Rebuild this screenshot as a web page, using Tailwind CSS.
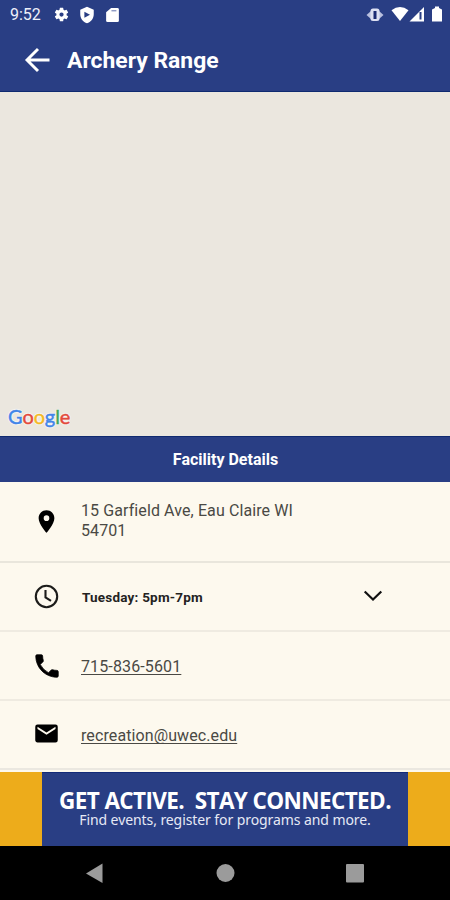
<!DOCTYPE html>
<html lang="en">
<head>
  <meta charset="UTF-8" />
  <meta name="viewport" content="width=device-width, initial-scale=1.0"/>
  <title>Archery Range</title>
  <script src="https://cdn.jsdelivr.net/npm/@tailwindcss/browser@4"></script>
</head>
<body class="w-[450px] h-[900px] overflow-hidden flex flex-col bg-[#fdf9ee] font-[Roboto,sans-serif]">

  <!-- Status bar + Header -->
  <header class="h-[92px] shrink-0 bg-[#293e84] text-white border-b border-[#0f2a70]">
    <div class="h-[30px] flex items-center pl-[10px] pr-[8px]">
      <span class="text-[16px] w-[43px] leading-[30px] text-[#eef0fa]">9:52</span>
      <svg class="w-[17px] h-[17px] -mt-[1px]" viewBox="0 0 24 24" fill="white"><path d="M19.14 12.94c.04-.3.06-.61.06-.94 0-.32-.02-.64-.07-.94l2.03-1.58a.49.49 0 0 0 .12-.61l-1.92-3.32a.49.49 0 0 0-.59-.22l-2.39.96a7 7 0 0 0-1.62-.94l-.36-2.54a.48.48 0 0 0-.48-.41h-3.84a.47.47 0 0 0-.47.41l-.36 2.54c-.59.24-1.13.57-1.62.94l-2.39-.96a.48.48 0 0 0-.59.22L2.74 8.87a.48.48 0 0 0 .12.61l2.03 1.58a6 6 0 0 0 0 1.88l-2.03 1.58a.49.49 0 0 0-.12.61l1.92 3.32c.12.22.37.29.59.22l2.39-.96c.5.38 1.03.7 1.62.94l.36 2.54c.05.24.24.41.48.41h3.84c.24 0 .44-.17.47-.41l.36-2.54a7 7 0 0 0 1.62-.94l2.39.96c.22.08.47 0 .59-.22l1.92-3.32a.48.48 0 0 0-.12-.61zM12 15a3 3 0 1 1 0-6 3 3 0 0 1 0 6z"/></svg>
      <svg class="w-[18px] h-[18px] ml-[8px] -mt-[1px]" viewBox="0 0 24 24" fill="white"><path fill-rule="evenodd" d="M12 1 3 5v6c0 5.500 3.800 10.700 9 12 5.200-1.300 9-6.500 9-12V5zM8.500 7.500v8l7.500-4z"/></svg>
      <svg class="w-[17px] h-[18px] ml-[8px] -mt-[1px]" viewBox="0 0 24 24" fill="white"><path d="M18 2h-8L3 8v12a2 2 0 0 0 2 2h14a2 2 0 0 0 2-2V4a2 2 0 0 0-2-2z"/><path d="M10.500 6h7" stroke="#8390bd" stroke-width="1.800"/></svg>
      <svg class="w-[20px] h-[16px] ml-auto -mt-[1px]" viewBox="0 0 20 16"><path d="M6 4 1.500 8 6 12zM14 4l4.500 4-4.500 4z" fill="#b9c0df"/><rect x="5.500" y="1.500" width="9" height="12.500" rx="2.500" fill="#dde0f2"/><rect x="8.500" y="4" width="3" height="8" fill="#1c2b73"/></svg>
      <svg class="w-[18px] h-[16px] ml-[6px] -mt-[2px]" viewBox="0 0 18 16" fill="white"><path d="M.5 4.200Q9-2.200 17.500 4.200L9 15z"/></svg>
      <svg class="w-[16px] h-[16px] -mt-[2px]" viewBox="0 0 16 16"><path d="M.5 15.500 15 1v14.500z" fill="white"/><path d="M10.500 6h2v7.500h-2z" fill="#293e84"/></svg>
      <svg class="w-[10px] h-[16px] ml-[7px] -mt-[2px]" viewBox="0 0 10 16" fill="white"><path d="M0 3.500 3 2V.5h4V2l3 1.500v12H0z"/></svg>
    </div>
    <div class="h-[60px] flex items-center pl-[24px]">
      <svg class="w-[27px] h-[26px]" viewBox="0 0 27 26" fill="none" stroke="white" stroke-width="2.900"><path d="M25.500 13H3M14 2 3 13l11 11"/></svg>
      <h1 class="ml-[16px] mt-[2px] text-[22.900px] font-bold leading-[30px] whitespace-nowrap">Archery Range</h1>
    </div>
  </header>

  <!-- Map -->
  <section class="h-[344px] shrink-0 bg-[#ebe7df] flex items-end pl-[8px] pb-[7px]">
    <div class="font-[Lato,sans-serif] text-[20px] leading-[25px] tracking-[-0.100px] [text-shadow:0_0_2px_#fff,0_0_2px_#fff,0_0_2px_#fff]"><span class="text-[#4285e8] [-webkit-text-stroke:0.500px_#4285e8]">G</span><span class="text-[#e2493c] [-webkit-text-stroke:0.500px_#e2493c]">o</span><span class="text-[#f3b925] [-webkit-text-stroke:0.500px_#f3b925]">o</span><span class="text-[#4285e8] [-webkit-text-stroke:0.500px_#4285e8]">g</span><span class="text-[#40a65a] [-webkit-text-stroke:0.500px_#40a65a]">l</span><span class="text-[#e2493c] [-webkit-text-stroke:0.500px_#e2493c]">e</span></div>
  </section>

  <!-- Facility Details -->
  <h2 class="h-[46px] shrink-0 bg-[#293e84] border-t border-[#0f2a70] text-white text-center text-[16px] font-bold leading-[46px] pl-[1px]">Facility Details</h2>
  <ul class="h-[290px] shrink-0 text-[#4a4944] text-[16px]">
    <li class="h-[81px] border-b-2 border-[#e9e6dc] flex items-center pl-[33px]">
      <svg class="w-[27px] h-[27px]" viewBox="0 0 24 24" fill="black"><path d="M12 2C8.130 2 5 5.130 5 9c0 5.250 7 13 7 13s7-7.750 7-13c0-3.870-3.130-7-7-7zm0 9.500a2.500 2.500 0 1 1 0-5 2.500 2.500 0 0 1 0 5z"/></svg>
      <p class="ml-[21px] -mt-[2px] w-[225px] leading-[19.500px] tracking-[0.100px]">15 Garfield Ave, Eau Claire WI 54701</p>
    </li>
    <li class="h-[69px] border-b-2 border-[#efebe1] flex items-center pl-[34px]">
      <svg class="w-[25px] h-[25px]" viewBox="0 0 25 25" fill="none" stroke="#1c1c1a" stroke-width="2.100"><circle cx="12.500" cy="12.500" r="10.700"/><path d="M11.500 6v7.300l5.500 3.500"/></svg>
      <p class="ml-[23px] mt-[1px] text-[13.500px] font-bold text-[#24231f] tracking-[0.200px]">Tuesday: 5pm-7pm</p>
      <svg class="w-[20px] h-[12px] ml-auto mr-[67px] -mt-[2px]" viewBox="0 0 20 12" fill="none" stroke="#111" stroke-width="2.200"><path d="m1.700 1.500 8.300 8 8.300-8"/></svg>
    </li>
    <li class="h-[69px] border-b-2 border-[#efebe1] flex items-center pl-[32px]">
      <svg class="w-[30px] h-[30px]" viewBox="0 0 24 24" fill="black"><path stroke="black" stroke-width=".6" d="M6.620 10.790a15.100 15.100 0 0 0 6.590 6.590l2.200-2.200a1 1 0 0 1 1.020-.24c1.120.37 2.330.57 3.570.57.550 0 1 .45 1 1V20c0 .55-.45 1-1 1C10.610 21 3 13.390 3 4c0-.55.450-1 1-1h3.500c.55 0 1 .45 1 1 0 1.250.2 2.450.57 3.570.110.350.030.740-.250 1.020z"/></svg>
      <p class="ml-[19px] mt-[2px] tracking-[0.130px] underline decoration-1 underline-offset-2">715-836-5601</p>
    </li>
    <li class="h-[69px] border-b-2 border-[#ebe8e0] flex items-center pl-[33px]">
      <svg class="w-[27px] h-[27px] -mt-[2px]" viewBox="0 0 24 24" fill="black"><path d="M20 4H4a2 2 0 0 0-2 2v12c0 1.100.9 2 2 2h16a2 2 0 0 0 2-2V6a2 2 0 0 0-2-2zm0 4-8 5-8-5V6l8 5 8-5z"/></svg>
      <p class="ml-[21px] mt-[2px] tracking-[0.100px] underline decoration-1 underline-offset-2 [text-decoration-skip-ink:none]">recreation@uwec.edu</p>
    </li>
  </ul>

  <!-- Banner -->
  <section class="h-[74px] shrink-0 bg-[#edac1b] pl-[42px] pr-[42px]">
    <div class="h-full bg-[#293e84] border-t border-[#142b78] text-white font-['Open_Sans',sans-serif] flex flex-col items-center pt-[17px] whitespace-pre">
      <p class="text-[22.500px] font-bold leading-[22px] tracking-[-0.600px]">GET ACTIVE.  STAY CONNECTED.</p>
      <p class="font-['Noto_Sans',sans-serif] text-[14px] leading-[15px] text-[#e6e9f5] tracking-[-0.080px]">Find events, register for programs and more.</p>
    </div>
  </section>

  <!-- Navigation bar -->
  <nav class="h-[54px] shrink-0 bg-black flex justify-between px-[85px] pt-[17px]">
    <svg class="w-[20px] h-[20px]" viewBox="0 0 20 20" fill="#9b9b9b"><path d="M1 10.500 17.500.5v19.500z"/></svg>
    <svg class="w-[20px] h-[20px]" viewBox="0 0 20 20" fill="#9b9b9b"><circle cx="10.500" cy="10" r="9"/></svg>
    <svg class="w-[20px] h-[20px]" viewBox="0 0 20 20" fill="#9b9b9b"><rect x="1" y="1" width="18" height="18.500" rx="1"/></svg>
  </nav>

</body>
</html>
